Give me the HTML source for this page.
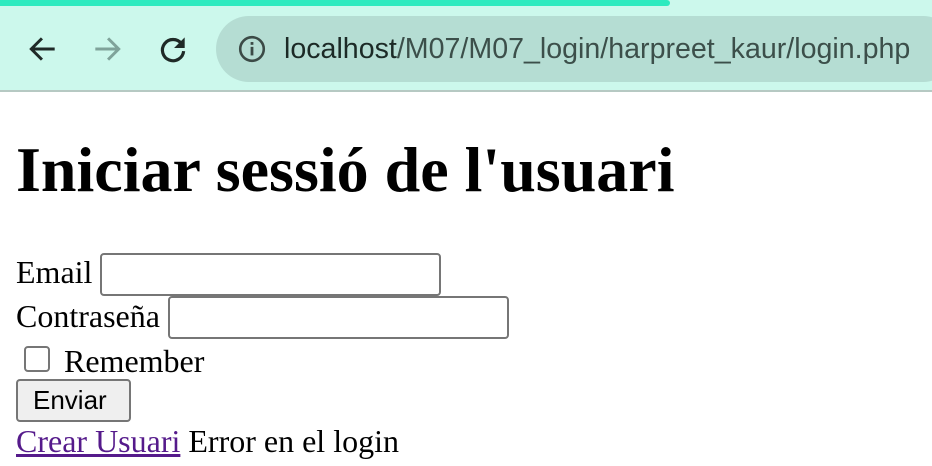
<!DOCTYPE html>
<html><head><meta charset="utf-8"><style>
*{margin:0;padding:0;box-sizing:border-box}
body{width:932px;height:466px;overflow:hidden;background:#fff;position:relative;font-family:"Liberation Serif",serif;color:#000}
.a{position:absolute;white-space:nowrap}
.inp{position:absolute;border:2px solid #767676;border-radius:4px;background:#fff}
</style></head><body>
<div class="a" style="left:0;top:0;width:932px;height:91px;background:#ccf8ec"></div>
<div class="a" style="left:0;top:0;width:670px;height:6px;background:#2eeabf;border-radius:0 4px 4px 0"></div>
<div class="a" style="left:0;top:90px;width:932px;height:2px;background:#b6c9c3"></div>
<div class="a" style="left:216px;top:16px;width:740px;height:66px;background:#b5ddd3;border-radius:33px"></div>
<svg class="a" style="left:26px;top:32px" width="34" height="34" viewBox="0 0 32 32"><path d="M27 16H5M15 6l-10 10 10 10" stroke="#1f2a27" stroke-width="2.8" fill="none"/></svg>
<svg class="a" style="left:90px;top:32px" width="34" height="34" viewBox="0 0 32 32"><path d="M5 16h22M17 6l10 10-10 10" stroke="#7fa39a" stroke-width="2.8" fill="none"/></svg>
<svg class="a" style="left:156px;top:32px" width="34" height="34" viewBox="0 0 32 32"><path d="M24 11A10 10 0 1 0 26 18" stroke="#1f2a27" stroke-width="3" fill="none"/><path d="M27 5v10H17z" fill="#1f2a27"/></svg>
<svg class="a" style="left:237px;top:34px" width="30" height="30" viewBox="0 0 28 28"><circle cx="14" cy="14" r="11" stroke="#3b4a46" stroke-width="2.4" fill="none"/><rect x="12.7" y="12" width="2.6" height="8" fill="#3b4a46"/><rect x="12.7" y="7.5" width="2.6" height="2.6" fill="#3b4a46"/></svg>
<div class="a" style="left:284px;top:32px;font:28.6px 'Liberation Sans',sans-serif;line-height:34px;color:#1c2a26">localhost<span style="color:#3c4f4a">/M07/M07_login/harpreet_kaur/login.php</span></div>
<div class="a" style="left:16px;top:134px;font-weight:bold;font-size:64px;line-height:72px">Iniciar sessió de l'usuari</div>
<div class="a" style="left:16px;top:252px;font-size:32px;line-height:40px">Email</div>
<div class="inp" style="left:100px;top:253px;width:341px;height:43px"></div>
<div class="a" style="left:16px;top:296px;font-size:32px;line-height:40px">Contraseña</div>
<div class="inp" style="left:168px;top:296px;width:341px;height:43px"></div>
<div class="a" style="left:24px;top:346px;width:26px;height:26px;border:2px solid #767676;border-radius:4px"></div>
<div class="a" style="left:64px;top:341px;font-size:32px;line-height:40px">Remember</div>
<div class="a" style="left:16px;top:379px;width:115px;height:43px;border:2px solid #767676;border-radius:4px;background:#efefef;font:26px 'Liberation Sans',sans-serif;line-height:38px;padding-left:15px">Enviar</div>
<div class="a" style="left:16px;top:421px;font-size:32px;line-height:40px"><span style="color:#551a8b;text-decoration:underline">Crear Usuari</span> Error en el login</div>
</body></html>
